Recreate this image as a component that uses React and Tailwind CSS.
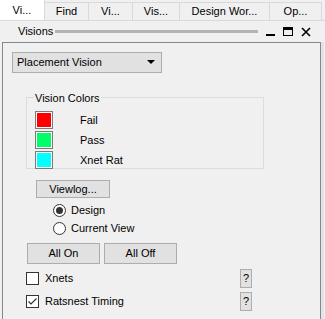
import React from "react";

const tabs = [
  { label: "Vi...", w: "w-[45px]", active: true },
  { label: "Find", w: "w-[44px]" },
  { label: "Vi...", w: "w-[44px]" },
  { label: "Vis...", w: "w-[47px]" },
  { label: "Design Wor...", w: "w-[90px]" },
  { label: "Op...", w: "w-[52px]" },
];

function Swatch({ color, label }) {
  return (
    <div className="flex items-center h-[20px]">
      <div className="w-[18px] h-[18px] border border-[#7a7a7a] p-[1px] bg-white">
        <div className={`w-full h-full ${color}`} />
      </div>
      <span className="ml-[27px]">{label}</span>
    </div>
  );
}

function Radio({ checked, label }) {
  return (
    <div className="flex items-center h-[18px]">
      <div className="w-[13px] h-[13px] rounded-full border border-[#333] bg-white flex items-center justify-center">
        {checked && <div className="w-[7px] h-[7px] rounded-full bg-[#333]" />}
      </div>
      <span className="ml-[5px]">{label}</span>
    </div>
  );
}

function Check({ checked, label }) {
  return (
    <div className="flex items-center h-[23px]">
      <div className="w-[13px] h-[13px] border border-[#333] bg-white flex items-center justify-center">
        {checked && (
          <svg width="11" height="11" viewBox="0 0 11 11">
            <path d="M1.5 5.5 L4 8 L9.5 2.5" fill="none" stroke="#333" strokeWidth="1.2" />
          </svg>
        )}
      </div>
      <span className="ml-[6px]">{label}</span>
      <div className="ml-auto mr-[68px] w-[12px] h-[19px] border border-[#adadad] bg-[#e1e1e1] flex items-center justify-center text-[11px]">
        ?
      </div>
    </div>
  );
}

export default function App() {
  return (
    <div className="w-[325px] h-[319px] overflow-hidden bg-[#f0f0f0] text-[11px] text-[#000] font-['Liberation_Sans',sans-serif]">
      <div className="flex h-[21px] border-b border-[#d9d9d9]">
        {tabs.map((t, i) => (
          <div
            key={i}
            className={`${t.w} flex items-center justify-center border-r border-[#d9d9d9] ${
              t.active ? "bg-white" : "bg-[#f0f0f0] mt-[2px] border-t"
            }`}
          >
            {t.label}
          </div>
        ))}
      </div>

      <div className="flex items-center h-[21px] pl-[18px] pr-[14px]">
        <span>Visions</span>
        <div className="ml-[2px] w-[203px] h-[3px] bg-[#b4b4b4]" />
        <div className="ml-auto flex items-center gap-[8px]">
          <div className="w-[9px] h-[9px] border-b-2 border-black" />
          <div className="w-[10px] h-[9px] border border-black border-t-[3px]" />
          <svg width="10" height="10" viewBox="0 0 10 10">
            <path d="M1 1 L9 9 M9 1 L1 9" stroke="#000" strokeWidth="1.6" />
          </svg>
        </div>
      </div>

      <div className="flex">
        <div className="ml-[2px] w-[319px] h-[300px] border border-[#828790] bg-[#f0f0f0] pt-[9px]">
          <div className="ml-[9px] w-[150px] h-[21px] border border-[#adadad] bg-[#e1e1e1] flex items-center pl-[4px] pr-[6px]">
            <span>Placement Vision</span>
            <svg className="ml-auto" width="8" height="5" viewBox="0 0 8 5">
              <path d="M0 0 H8 L4 4 Z" fill="#000" />
            </svg>
          </div>

          <div className="relative ml-[23px] mt-[24px] w-[238px] h-[72px] border border-[#dcdcdc] pt-[12px] pl-[8px]">
            <span className="absolute -top-[8px] left-[7px] px-[1px] bg-[#f0f0f0]">Vision Colors</span>
            <Swatch color="bg-[#ff0000]" label="Fail" />
            <Swatch color="bg-[#00ff66]" label="Pass" />
            <Swatch color="bg-[#00ffff]" label="Xnet Rat" />
          </div>

          <div className="ml-[33px] mt-[11px] w-[74px] h-[18px] border border-[#adadad] bg-[#e1e1e1] flex items-center justify-center">
            Viewlog...
          </div>

          <div className="ml-[50px] mt-[3px]">
            <Radio checked label="Design" />
            <Radio label="Current View" />
          </div>

          <div className="ml-[24px] mt-[6px] flex gap-[4px]">
            <div className="w-[73px] h-[21px] border border-[#adadad] bg-[#e1e1e1] flex items-center justify-center">All On</div>
            <div className="w-[73px] h-[21px] border border-[#adadad] bg-[#e1e1e1] flex items-center justify-center">All Off</div>
          </div>

          <div className="ml-[23px] mt-[3px]">
            <Check label="Xnets" />
            <Check checked label="Ratsnest Timing" />
          </div>
        </div>
        <div className="w-[3px] h-[300px] bg-[#e3e3e3]" />
      </div>
    </div>
  );
}
